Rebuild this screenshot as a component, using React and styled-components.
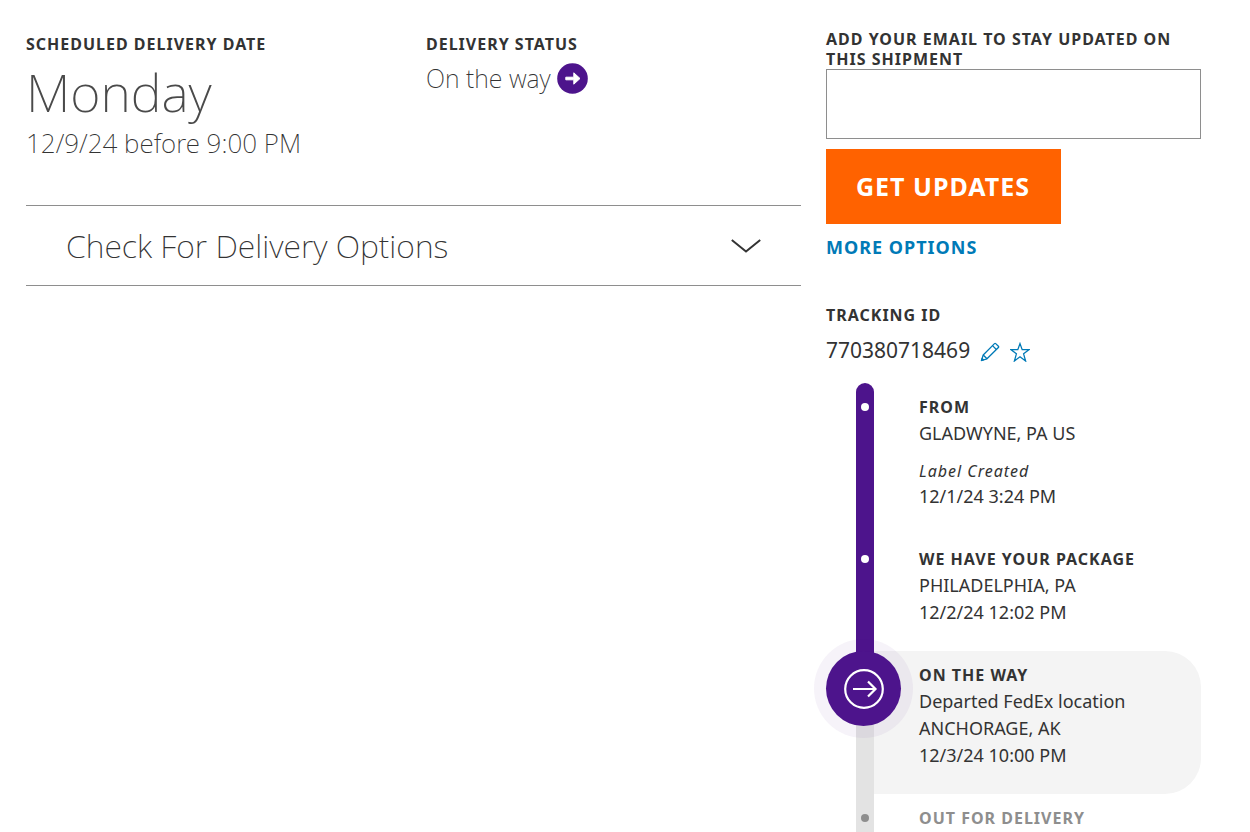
import React, { useState } from "react";
import styled, { createGlobalStyle } from "styled-components";

const GlobalStyle = createGlobalStyle`
  * {
    box-sizing: border-box;
  }
  body {
    margin: 0;
    background: #fff;
    color: #333;
    font-family: "Noto Sans", "Open Sans", sans-serif;
  }
  h1, h2, h3, p, ol {
    margin: 0;
    padding: 0;
    font-weight: inherit;
  }
`;

const Page = styled.main`
  display: grid;
  grid-template-columns: repeat(3, minmax(0, 1fr));
  column-gap: 25px;
  min-height: 100vh;
  padding: 29px 49px 0 26px;
`;

const Main = styled.div`
  grid-column: span 2;
  padding-top: 5px;
`;

const Summary = styled.div`
  display: grid;
  grid-template-columns: 1fr 1fr;
  column-gap: 25px;
  padding-bottom: 45px;
`;

const Title = styled.h2`
  color: ${(props) => (props.$muted ? "#8e8e8e" : "#333")};
  font-size: 16px;
  font-weight: 700;
  line-height: 20px;
  letter-spacing: 1px;
  text-transform: uppercase;
`;

const Day = styled.p`
  margin: 5px 0 2px;
  color: #4a4a4a;
  font-size: 52px;
  font-weight: 200;
  line-height: 65px;
`;

const DayTime = styled.p`
  font-size: 26px;
  font-weight: 200;
  line-height: 34px;
`;

const Status = styled.p`
  display: flex;
  align-items: center;
  gap: 6px;
  margin-top: 7px;
  font-size: 25px;
  font-weight: 200;
  line-height: 34px;
`;

const Options = styled.button`
  display: flex;
  align-items: center;
  justify-content: space-between;
  width: 100%;
  padding: 20px 40px 19px;
  border: solid #8e8e8e;
  border-width: 1px 0;
  background: none;
  color: #333;
  font-family: inherit;
  font-size: 32px;
  font-weight: 200;
  line-height: 40px;
  text-align: left;
  cursor: pointer;
`;

const Side = styled.aside`
  display: flex;
  flex-direction: column;
`;

const EmailForm = styled.form`
  display: flex;
  flex-direction: column;
  align-items: flex-start;
`;

const EmailInput = styled.input`
  width: 100%;
  height: 70px;
  padding: 0 20px;
  border: 1px solid #8e8e8e;
  border-radius: 0;
  background: #fff;
  color: #333;
  font-family: inherit;
  font-size: 25px;
`;

const UpdateButton = styled.button`
  height: 75px;
  margin-top: 10px;
  padding: 0 31px 2px 30px;
  border: 0;
  background: #ff6200;
  color: #fff;
  font-family: inherit;
  font-size: 25px;
  font-weight: 700;
  letter-spacing: 1px;
  cursor: pointer;
`;

const MoreLink = styled.a`
  margin-top: 11px;
  color: #007ab7;
  font-size: 18px;
  font-weight: 700;
  line-height: 24px;
  letter-spacing: 1px;
  text-decoration: none;
`;

const Tracking = styled.section`
  margin-top: 46px;
`;

const TrackingRow = styled.div`
  display: flex;
  align-items: center;
  gap: 10px;
  height: 28px;
  margin: 11px 0 19px;
  font-size: 21px;
`;

const IconButton = styled.button`
  display: flex;
  padding: 4px 0 0;
  border: 0;
  background: none;
  color: #007ab7;
  cursor: pointer;
`;

const Timeline = styled.ol`
  display: flex;
  flex: 1;
  flex-direction: column;
  list-style: none;
`;

const Step = styled.li`
  display: flex;
  padding-left: 30px;

  &:last-child {
    flex: 1;
  }
`;

const railColor = ({ $done, $current }) => {
  if ($done) return "#4d148c";
  return $current ? "linear-gradient(#4d148c 20px, #e3e3e3 20px)" : "#e3e3e3";
};

const Rail = styled.div`
  position: relative;
  display: flex;
  justify-content: center;
  flex: none;
  width: 18px;
  padding-top: 20px;
  border-radius: ${(props) => (props.$first ? "9px 9px 0 0" : "0")};
  background: ${railColor};
`;

const Dot = styled.span`
  width: 8px;
  height: 8px;
  border-radius: 50%;
  background: ${(props) => (props.$done ? "#fff" : "#8e8e8e")};
`;

/* current position, sits over the rail and the card */
const Current = styled.span`
  position: absolute;
  z-index: 1;
  top: 0;
  left: -30px;
  display: flex;
  align-items: center;
  justify-content: center;
  width: 75px;
  height: 75px;
  border-radius: 50%;
  background: #4d148c;
  box-shadow: 0 0 0 12px rgba(77, 20, 140, 0.05);
`;

const StepBody = styled.div`
  flex: 1;
  min-width: 0;
  padding: 14px 0 ${(props) => (props.$last ? "0" : "25px")} 45px;
  border-radius: 0 36px 36px 0;
  background: ${(props) => (props.$current ? "#f4f4f4" : "none")};
`;

const Line = styled.p`
  font-size: 18px;
  line-height: 27px;

  ${Title} + & {
    margin-top: 3px;
  }
`;

const Note = styled.p`
  margin: 14px 0 2px;
  font-size: 16px;
  font-style: italic;
  line-height: 20px;
  letter-spacing: 1px;
`;

const steps = [
  {
    title: "From",
    lines: ["GLADWYNE, PA US"],
    note: "Label Created",
    noteTime: "12/1/24 3:24 PM",
    done: true,
  },
  {
    title: "We have your package",
    lines: ["PHILADELPHIA, PA", "12/2/24 12:02 PM"],
    done: true,
  },
  {
    title: "On the way",
    lines: ["Departed FedEx location", "ANCHORAGE, AK", "12/3/24 10:00 PM"],
    current: true,
  },
  { title: "Out for delivery", lines: [] },
];

const StatusIcon = () => (
  <svg width="31" height="31" viewBox="0 0 31 31" aria-hidden="true">
    <circle cx="15.5" cy="15.5" r="15.3" fill="#4d148c" />
    <path d="M8.800 14.200h8V9.800l6.200 5.700-6.200 5.700v-4.400h-8z" fill="#fff" stroke="#fff" strokeLinejoin="round" />
  </svg>
);

const ChevronIcon = () => (
  <svg width="30" height="14" viewBox="0 0 30 14" fill="none" stroke="#333" strokeWidth="2" aria-hidden="true">
    <path d="M.8 1L15 12.5 29.2 1" />
  </svg>
);

const PencilIcon = () => (
  <svg width="20" height="20" viewBox="0 0 20 20" fill="none" stroke="currentColor" strokeWidth="1.3" strokeLinejoin="round" aria-hidden="true">
    <path d="M1.500 18.500l1.700-5.500L14.500 1.600q.6-.6 1.200 0l2.700 2.700q.6.6 0 1.200L7 16.800z" />
    <path d="M3.200 13l3.800 3.800M12.500 3.600l3.900 3.900" />
    <path d="M1.500 18.500l.6-2 1.400 1.400z" fill="currentColor" />
  </svg>
);

const StarIcon = () => (
  <svg width="20" height="20" viewBox="0 0 20 20" fill="none" stroke="currentColor" strokeWidth="1.3" aria-hidden="true">
    <path d="M10 1.600l2.200 6.100h6.700l-5.300 4.100 2 7.200-5.600-4.200-5.600 4.200 2-7.200-5.300-4.100h6.700z" />
  </svg>
);

const CurrentIcon = () => (
  <svg width="40" height="40" viewBox="0 0 40 40" fill="none" stroke="#fff" strokeWidth="2.2" aria-hidden="true">
    <circle cx="20" cy="20" r="18.8" />
    <path d="M9 20h23M24 12.500l7.500 7.500-7.500 7.500" />
  </svg>
);

function TimelineStep({ step, first, last }) {
  const { title, lines, note, noteTime, done, current } = step;
  return (
    <Step aria-current={current ? "step" : undefined}>
      <Rail $done={done} $current={current} $first={first}>
        {current ? (
          <Current>
            <CurrentIcon />
          </Current>
        ) : (
          <Dot $done={done} />
        )}
      </Rail>
      <StepBody $current={current} $last={last}>
        <Title as="h3" $muted={!done && !current}>{title}</Title>
        {lines.map((line) => (
          <Line key={line}>{line}</Line>
        ))}
        {note && <Note>{note}</Note>}
        {noteTime && <Line>{noteTime}</Line>}
      </StepBody>
    </Step>
  );
}

function App() {
  const [email, setEmail] = useState("");

  return (
    <>
      <GlobalStyle />
      <Page>
        <Main>
          <Summary>
            <div>
              <Title>Scheduled delivery date</Title>
              <Day>Monday</Day>
              <DayTime>12/9/24 before 9:00 PM</DayTime>
            </div>
            <div>
              <Title>Delivery status</Title>
              <Status>
                On the way
                <StatusIcon />
              </Status>
            </div>
          </Summary>
          <Options type="button">
            Check For Delivery Options
            <ChevronIcon />
          </Options>
        </Main>
        <Side>
          <EmailForm onSubmit={(e) => e.preventDefault()}>
            <Title as="label" htmlFor="email">
              Add your email to stay updated on this shipment
            </Title>
            <EmailInput
              id="email"
              type="email"
              value={email}
              onChange={(e) => setEmail(e.target.value)}
            />
            <UpdateButton type="submit">GET UPDATES</UpdateButton>
            <MoreLink href="#options">MORE OPTIONS</MoreLink>
          </EmailForm>
          <Tracking>
            <Title>Tracking ID</Title>
            <TrackingRow>
              770380718469
              <IconButton type="button" aria-label="Edit nickname">
                <PencilIcon />
              </IconButton>
              <IconButton type="button" aria-label="Add to watch list">
                <StarIcon />
              </IconButton>
            </TrackingRow>
          </Tracking>
          <Timeline>
            {steps.map((step, i) => (
              <TimelineStep
                key={step.title}
                step={step}
                first={i === 0}
                last={i === steps.length - 1}
              />
            ))}
          </Timeline>
        </Side>
      </Page>
    </>
  );
}

export default App;
